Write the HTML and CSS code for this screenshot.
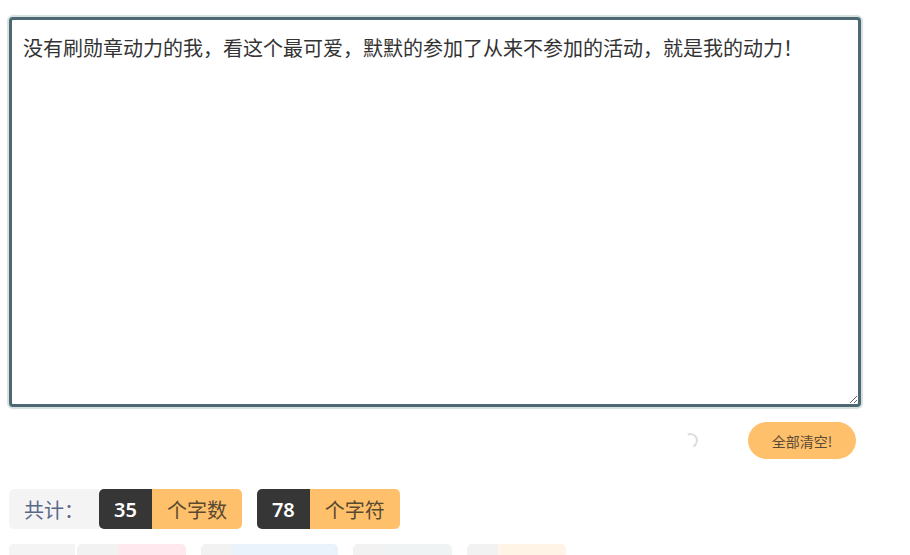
FILE: index.html
```html
<!DOCTYPE html>
<html>
<head>
    <meta charset="UTF-8">
    <title>字数统计</title>
    <link rel="stylesheet" href="styles.css">
</head>
<body>
    <div class="page">
        <textarea class="input-box" id="input-box">没有刷勋章动力的我，看这个最可爱，默默的参加了从来不参加的活动，就是我的动力！</textarea>

        <div class="actions">
            <span class="spinner"></span>
            <button class="clear-button" id="clear-button">全部清空!</button>
        </div>

        <div class="stats">
            <span class="stat-label">共计：</span>
            <div class="stat-pair">
                <span class="num">35</span>
                <span class="unit">个字数</span>
            </div>
            <div class="stat-pair">
                <span class="num">78</span>
                <span class="unit">个字符</span>
            </div>
        </div>

        <div class="stats detail">
            <span class="stat-label small">包含:</span>
            <div class="stat-pair">
                <span class="num light">35</span>
                <span class="unit pink">个汉字</span>
            </div>
            <div class="stat-pair">
                <span class="num light">1</span>
                <span class="unit blue">个标点符号</span>
            </div>
            <div class="stat-pair">
                <span class="num light">0</span>
                <span class="unit slate">个字母</span>
            </div>
            <div class="stat-pair">
                <span class="num light">0</span>
                <span class="unit cream">个数字</span>
            </div>
        </div>
    </div>
</body>
</html>
```

FILE: styles.css
```css
body {
    margin: 0;
    font-family: "Noto Sans", "Noto Sans CJK SC", sans-serif;
    background: white;
    color: #333;
}

.page {
    padding: 17px 9px;
}

.input-box {
    display: block;
    box-sizing: border-box;
    width: 852px;
    height: 390px;
    margin: 0;
    padding: 13px 11px;
    border: 3px solid #4c6870;
    border-radius: 4px;
    box-shadow: 0 0 1px 2px #d6dfe1;
    font-family: "Noto Sans CJK SC", sans-serif;
    font-size: 20px;
    line-height: 30px;
    color: #333;
    outline: none;
}

.actions {
    display: flex;
    justify-content: flex-end;
    align-items: center;
    gap: 50px;
    margin-top: 15px;
    padding-right: 5px;
    width: 852px;
    box-sizing: border-box;
}

.spinner {
    width: 11px;
    height: 11px;
    border: 2px solid transparent;
    border-top-color: #dcdcdc;
    border-right-color: #dcdcdc;
    border-radius: 50%;
    transform: rotate(20deg);
}

.clear-button {
    width: 108px;
    height: 37px;
    border: none;
    border-radius: 19px;
    background: #ffc06c;
    color: #5b4a36;
    font-family: "Noto Sans CJK SC", sans-serif;
    font-size: 14px;
    cursor: pointer;
}

.stats {
    display: flex;
    gap: 15px;
    margin-top: 30px;
}

.stats.detail {
    margin-top: 15px;
}

.stat-label {
    display: flex;
    align-items: center;
    height: 40px;
    padding: 0 15px;
    margin-right: -15px;
    background: #f4f4f4;
    border-radius: 5px 0 0 5px;
    color: #5a6888;
    font-family: "Noto Sans CJK SC", sans-serif;
    font-size: 20px;
}

.stat-label.small {
    font-size: 16px;
    margin-right: -13px;
}

.stat-pair {
    display: flex;
    height: 40px;
    border-radius: 5px;
    overflow: hidden;
}

.num {
    display: flex;
    align-items: center;
    padding: 0 15px;
    background: #363636;
    color: white;
    font-size: 20px;
    font-weight: 600;
}

.unit {
    display: flex;
    align-items: center;
    padding: 0 15px;
    background: #ffc06c;
    color: #5a4a30;
    font-family: "Noto Sans CJK SC", sans-serif;
    font-size: 20px;
}

.detail .num,
.detail .unit {
    font-size: 16px;
    font-weight: normal;
}

.num.light {
    background: #f2f2f2;
    color: #556;
    padding: 0 11px;
}

.unit.pink {
    background: #ffe9ee;
    color: #d0345a;
    padding: 0 10px;
}

.unit.blue {
    background: #eaf3fb;
    color: #2f7fc1;
    padding: 0 13px;
}

.unit.slate {
    background: #eff3f4;
    color: #6b8290;
    padding: 0 10px;
}

.unit.cream {
    background: #fff4e6;
    color: #b8792a;
    padding: 0 10px;
}
```
